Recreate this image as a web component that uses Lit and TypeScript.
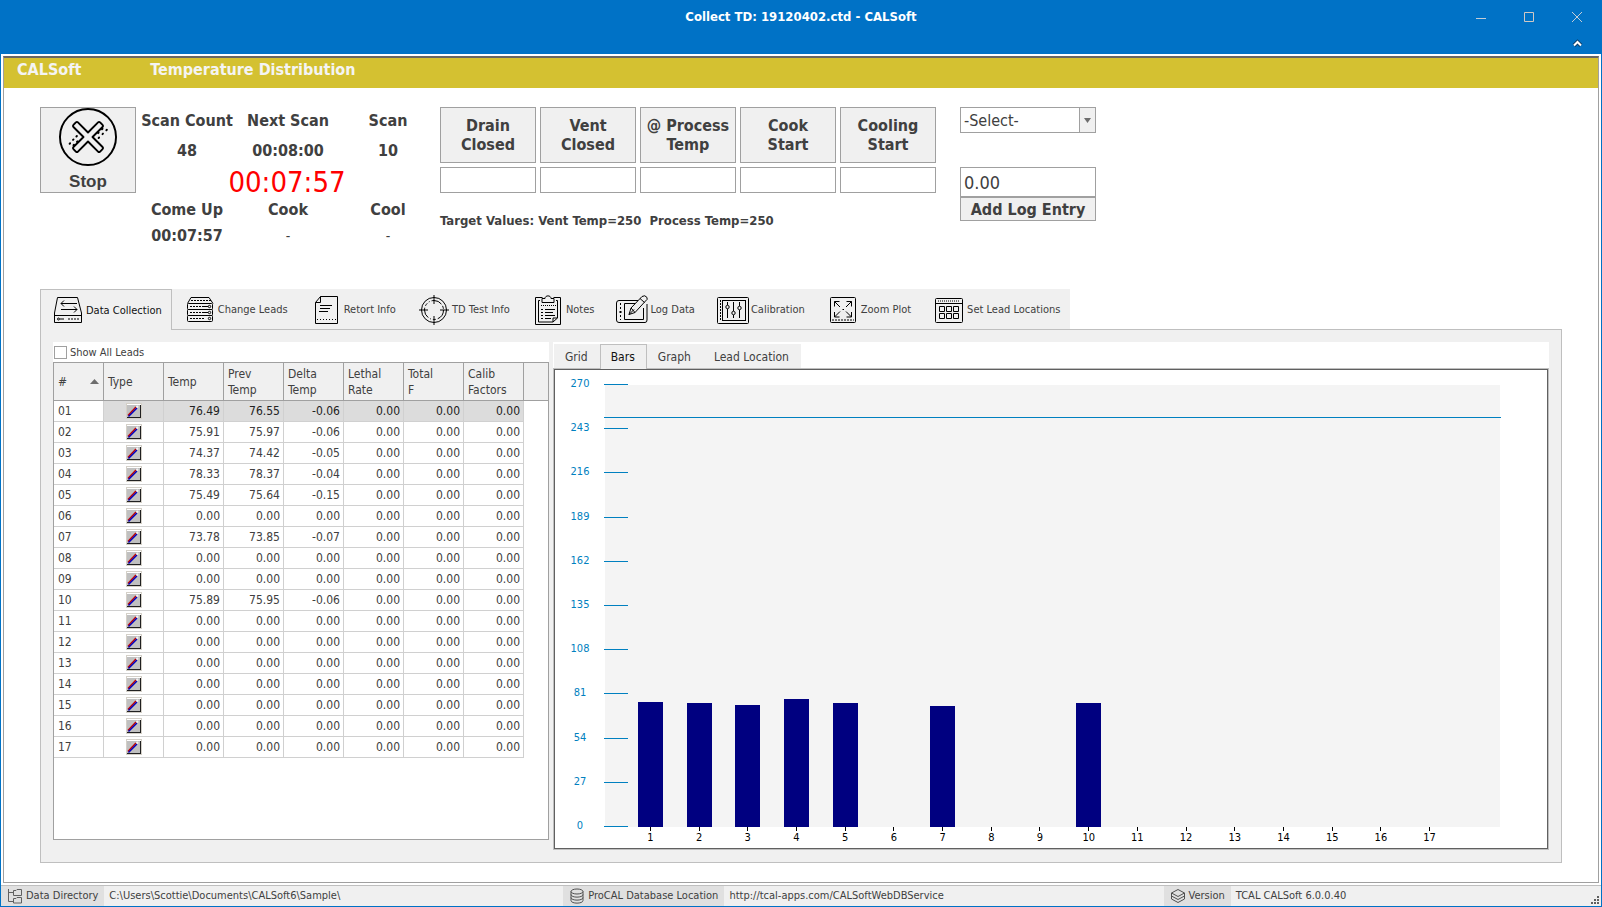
import { LitElement, html, css, svg } from "lit";
import { customElement, state } from "lit/decorators.js";
import { classMap } from "lit/directives/class-map.js";

interface Lead {
  id: string;
  temp: number;
  prev: number;
}

const TEMPS: [number, number][] = [
  [76.49, 76.55], [75.91, 75.97], [74.37, 74.42], [78.33, 78.37], [75.49, 75.64],
  [0, 0], [73.78, 73.85], [0, 0], [0, 0], [75.89, 75.95],
  [0, 0], [0, 0], [0, 0], [0, 0], [0, 0], [0, 0], [0, 0],
];

const LEADS: Lead[] = TEMPS.map(([temp, prev], i) => ({
  id: String(i + 1).padStart(2, "0"),
  temp,
  prev,
}));

const AXIS_MAX = 270;
const TICKS = [270, 243, 216, 189, 162, 135, 108, 81, 54, 27, 0];
const TARGET = 250;

const icons = {
  collect: svg`<path d="M5.500 3.500H25.500L29.500 19V28.500H2.500V19ZM2.500 21.500H29.500"/><path d="M9 9.500H25M12 6.500L9 9.500L12 12.500M9 15.500H25M22 12.500L25 15.500L22 18.500"/><circle cx="6.500" cy="25" r="1"/><path d="M8 25H12"/><path d="M16 25H27" stroke-dasharray="2 1"/>`,
  leads: svg`<path d="M7 3.500H25L29 9.500M7 3.500L3.500 9.500"/><path d="M7 6.500H27" stroke-dasharray="2 1"/><rect x="3.500" y="9.500" width="25" height="6" rx="1"/><rect x="3.500" y="15.500" width="25" height="6" rx="1"/><rect x="3.500" y="21.500" width="25" height="6" rx="1"/><path d="M6 12.500H20M6 18.500H20M6 24.500H20" stroke-dasharray="2 1"/><path d="M20 12.500H24M20 18.500H24"/><circle cx="25.500" cy="12.500" r="1.200"/><circle cx="25.500" cy="18.500" r="1.200"/><circle cx="25.500" cy="24.500" r="1.200"/>`,
  retort: svg`<path d="M10.500 2.500H27.500V29.500H5.500V8.500ZM10.500 2.500V8.500H5.500"/><path d="M10 11.500H22M10 14.500H20M9 17.500H18"/><path d="M7 25.500H26" stroke-dasharray="1 2"/>`,
  target: svg`<circle cx="16" cy="16" r="12.500"/><circle cx="16" cy="16" r="9.500" stroke-dasharray="11 2 3 2 1 2"/><path d="M16 1V10M16 22V31M1 16H10M22 16H31"/>`,
  notes: svg`<path d="M10.500 3.500H3.500V30.500H28.500V3.500H21.500"/><path d="M8 6.500H6.500V28H21L25.500 24V6.500H24M21 28V24H25.500"/><path d="M10 8.500V4.500H13C13 1 19 1 19 4.500H22V8.500Z"/><path d="M9 11.500H24" stroke-dasharray="1 1"/><path d="M13 15.500H23M13 18.500H21M13 21.500H23M13 24.500H19"/><path d="M9 15.500H11M9 18.500H11M9 21.500H11M9 24.500H11"/>`,
  log: svg`<path d="M22 6.500H3Q.500 6.500 .500 9V26Q.500 28.500 3 28.500H29Q31 28.500 31 26V10"/><path d="M19 9.500H8.500V25.500H27.500V14"/><path d="M4.500 9V26" stroke-dasharray="2 2"/><path d="M3 18H6"/><path d="M13 20.500L15 14L26 2.500Q29 .500 31 3.500Q32 5.500 29.500 7L19 18.500ZM15 14L19 18.500M13 20.500L18 15.500M24 4.500L28.500 8.500"/>`,
  calibration: svg`<rect x=".500" y="3.500" width="31" height="26" rx="1"/><rect x="5.500" y="6.500" width="23" height="20"/><path d="M3.500 6V27" stroke-dasharray="2 1"/><path d="M10.500 8V11M10.500 15V24M16.500 8V17M16.500 21V24M22.500 8V12M22.500 16V24"/><circle cx="10.500" cy="13" r="1.700"/><circle cx="16.500" cy="19" r="1.700"/><circle cx="22.500" cy="14" r="1.700"/>`,
  zoom: svg`<rect x="3.500" y="3.500" width="25" height="25" rx="1"/><path d="M5 26H27" stroke-dasharray="2 1"/><path d="M7.500 12.500V7.500H12.500M7.500 7.500L13 13M19.500 7.500H24.500V12.500M24.500 7.500L19 13M7.500 18V23H12.500M7.500 23L13 17.500M24.500 18V23H19.500M24.500 23L19 17.500M15.500 15.500H17"/>`,
  locations: svg`<rect x="2.500" y="4.500" width="27" height="24" rx="1"/><path d="M2.500 9.500H29.500"/><path d="M5 7H27" stroke-dasharray="1 1"/><path d="M6.500 12.500H11.500V17.500H6.500ZM13.500 12.500H18.500V17.500H13.500ZM20.500 12.500H25.500V17.500H20.500ZM6.500 19.500H11.500V24.500H6.500ZM13.500 19.500H18.500V24.500H13.500ZM20.500 19.500H25.500V24.500H20.500Z"/>`,
};

const TABS: { label: string; icon: keyof typeof icons }[] = [
  { label: "Data Collection", icon: "collect" },
  { label: "Change Leads", icon: "leads" },
  { label: "Retort Info", icon: "retort" },
  { label: "TD Test Info", icon: "target" },
  { label: "Notes", icon: "notes" },
  { label: "Log Data", icon: "log" },
  { label: "Calibration", icon: "calibration" },
  { label: "Zoom Plot", icon: "zoom" },
  { label: "Set Lead Locations", icon: "locations" },
];

const PHASES = [
  ["Drain", "Closed"],
  ["Vent", "Closed"],
  ["@ Process", "Temp"],
  ["Cook", "Start"],
  ["Cooling", "Start"],
];

const reset = css`
  * { box-sizing: border-box; }
  button, input, select { font: inherit; color: inherit; margin: 0; border-radius: 0; }
`;

@customElement("lead-table")
class LeadTable extends LitElement {
  static styles = [reset, css`
    :host { display: flex; flex-direction: column; background: #fff; }
    .all { display: flex; align-items: center; gap: 3px; height: 20px; padding-left: 1px; font-size: 11px; }
    .all input { appearance: none; width: 13px; height: 13px; border: 1px solid #a0a0a0; background: #fff; }
    .all input:checked { background: #0072c6; }
    .frame { flex: 1; border: 1px solid #a0a0a0; }
    table { width: 100%; border-collapse: separate; border-spacing: 0; table-layout: fixed; font-size: 12px; }
    th { height: 38px; padding: 0 4px; text-align: left; font-weight: normal; line-height: 16px; background: #f0f0f0;
      border-right: 1px solid #a0a0a0; border-bottom: 1px solid #a0a0a0; }
    th:last-child { border-right: 0; }
    td { height: 21px; padding: 0 3px; line-height: 16px; text-align: right; border-right: 1px solid #d0d0d0; border-bottom: 1px solid #d0d0d0; }
    td:first-child { text-align: left; padding-left: 4px; }
    td.type { text-align: center; }
    td:last-child { border: 0; background: #fff; }
    .selected td:not(:first-child):not(:last-child) { background: #dcdcdc; color: #222; }
    .sort { display: flex; justify-content: space-between; align-items: center; }
    .num { width: 50px; }
    .col { width: 60px; }
    svg { display: block; }
    .type svg { margin: 0 auto; }
  `];

  private pen() {
    return html`<svg width="16" height="16" viewBox="0 0 16 16" shape-rendering="crispEdges" aria-hidden="true">
      <rect width="16" height="16" fill="#d4d0c8"/><rect x="1" y="1" width="14" height="14" fill="#fff"/>
      <rect x="1" y="2" width="13" height="12" fill="#c0c0c0"/><path d="M14 2h1v13H1v-1h13z" fill="#202020"/>
      <g shape-rendering="auto" stroke-width="1.500"><path d="M2 12.500L10 4" stroke="#c00000"/><path d="M2.500 13.500L11 5" stroke="#0000c0"/><path d="M10.500 3L12 4.500" stroke="#f0f0f0" stroke-width="2"/></g>
    </svg>`;
  }

  render() {
    const heads = ["Temp", "Prev|Temp", "Delta|Temp", "Lethal|Rate", "Total|F", "Calib|Factors"];
    return html`
      <label class="all"><input type="checkbox" />Show All Leads</label>
      <div class="frame">
        <table>
          <thead><tr>
            <th class="num"><span class="sort">#<svg width="9" height="5" aria-hidden="true"><path d="M0 5L4.500 0L9 5Z" fill="#6d6d6d"/></svg></span></th>
            <th class="col">Type</th>
            ${heads.map((h) => html`<th class="col">${h.split("|").map((w, i) => (i ? html`<br />${w}` : w))}</th>`)}
            <th></th>
          </tr></thead>
          <tbody>
            ${LEADS.map((l, i) => html`<tr class=${classMap({ selected: i === 0 })}>
              <td>${l.id}</td><td class="type">${this.pen()}</td>
              <td>${l.temp.toFixed(2)}</td><td>${l.prev.toFixed(2)}</td>
              <td>${(l.temp - l.prev).toFixed(2)}</td>
              <td>0.00</td><td>0.00</td><td>0.00</td><td></td>
            </tr>`)}
          </tbody>
        </table>
      </div>`;
  }
}

@customElement("lead-bars")
class LeadBars extends LitElement {
  static styles = [reset, css`
    :host { display: flex; flex-direction: column; background: #fff; padding-top: 2px; }
    .tabs { display: flex; align-self: flex-start; margin-left: 1px; height: 24px; background: #f0f0f0; font-size: 12px; }
    .tabs button { border: 1px solid transparent; border-bottom: 0; background: none; padding: 0 11px 0 10px; }
    .tabs .on { border-color: #bfbfbf; color: #111; margin-bottom: -1px; background: #f0f0f0; z-index: 1; }
    .outer { flex: 1; display: flex; border: 1px solid #bfbfbf; }
    .inner { flex: 1; display: flex; border: 1px solid #606060; padding: 15px 47px 21px 50px; font-size: 11px; }
    .plot { flex: 1; position: relative; display: flex; padding: 0 46px 0 21px; background: #f4f4f4; }
    .cell { flex: 1; position: relative; display: flex; align-items: flex-end; justify-content: center; }
    .bar { width: 25px; background: #000080; }
    .cell span { position: absolute; top: 100%; left: 0; right: 0; text-align: center; color: #000; line-height: 13px; }
    .cell span::before { content: ""; display: block; width: 1px; height: 4px; margin: 0 auto; background: #000; }
    .tick { position: absolute; left: -1px; width: 24px; border-top: 1px solid #0080c0; }
    .tick b { position: absolute; right: 100%; top: -8px; width: 48px; text-align: center; font-weight: normal; line-height: 14px; color: #0080c0; }
    .target { position: absolute; left: -1px; right: -1px; border-top: 1px solid #0080c0; }
  `];

  @state() private tab = "Bars";

  render() {
    return html`
      <div class="tabs" role="tablist">
        ${["Grid", "Bars", "Graph", "Lead Location"].map((t) => html`<button role="tab" aria-selected=${t === this.tab}
          class=${classMap({ on: t === this.tab })} @click=${() => (this.tab = t)}>${t}</button>`)}
      </div>
      <div class="outer"><div class="inner"><div class="plot">
        ${LEADS.map((l, i) => html`<div class="cell"><div class="bar" style="height:${(l.temp / AXIS_MAX) * 100}%"></div><span>${i + 1}</span></div>`)}
        ${TICKS.map((t) => html`<div class="tick" style="bottom:${(t / AXIS_MAX) * 100}%"><b>${t}</b></div>`)}
        <div class="target" style="bottom:${(TARGET / AXIS_MAX) * 100}%"></div>
      </div></div></div>`;
  }
}

@customElement("app-root")
class AppRoot extends LitElement {
  static styles = [reset, css`
    :host { display: flex; flex-direction: column; min-height: 100vh; box-sizing: border-box; border: 1px solid #0072c6; border-top: 0;
      background: #fff; color: #404040; font-family: "DejaVu Sans Condensed", "DejaVu Sans", sans-serif; font-size: 11px; }
    .title { display: grid; grid-template-columns: 1fr auto 1fr; grid-template-rows: 33px 21px; align-items: center; background: #0072c6; color: #fff; }
    .title h1 { grid-column: 2; margin: 0; font-size: 13px; font-weight: bold; }
    .win { display: flex; justify-content: flex-end; }
    .win button, .fold { width: 48px; height: 21px; display: grid; place-items: center; padding: 0; border: 0; background: none; }
    .fold { grid-column: 3; justify-self: end; }
    .page { flex: 1; display: flex; flex-direction: column; margin: 2px; border: 1px solid #a0a0a0; border-top: 2px solid #666; }
    .banner { display: flex; gap: 69px; height: 30px; padding: 2px 13px; background: #d4c131; color: #f4f4f4; font-size: 16px; font-weight: bold; line-height: 20px; }
    .controls { display: flex; align-items: flex-start; padding: 19px 36px 0; height: 201px; }
    .stop { width: 96px; height: 86px; border: 1px solid #a0a0a0; background: #f0f0f0; padding: 0; display: flex; flex-direction: column; align-items: center; justify-content: flex-start; gap: 6px;
      font: bold 17px/20px "Liberation Sans", Arial, sans-serif; }
    .stats { display: grid; grid-template-columns: 102px 100px 100px; grid-template-rows: 26px 34px 30px 25px 27px; margin-right: 2px; font-size: 16px; font-weight: bold; text-align: center; align-items: center; }
    .stats .clock { grid-column: 1 / 4; color: #f00; font-size: 29px; line-height: 30px; font-weight: normal; }
    .stats .idle { font-weight: normal; font-size: 14px; }
    .phases { display: grid; grid-template-columns: repeat(5, 96px); gap: 4px; }
    .phases button { height: 56px; padding: 0; border: 1px solid #a0a0a0; background: #f0f0f0; font-size: 16px; line-height: 19px; font-weight: bold; }
    .phases input { width: 96px; height: 26px; border: 1px solid #a0a0a0; background: #fff; padding: 0 3px; font-size: 16px; }
    .phases p { grid-column: 1 / 6; margin: 16px 0 0; font-size: 13px; line-height: 16px; font-weight: bold; white-space: pre; }
    .log { display: flex; flex-direction: column; width: 136px; margin-left: 24px; }
    .pick { display: grid; height: 26px; margin-bottom: 34px; border: 1px solid #a0a0a0; font-size: 16px; }
    .pick select { grid-area: 1 / 1; appearance: none; border: 0; background: #fff; padding: 0 20px 0 3px; }
    .pick i { grid-area: 1 / 1; justify-self: end; width: 16px; display: grid; place-items: center; border-left: 1px solid #a0a0a0; background: #f0f0f0; pointer-events: none; z-index: 1; }
    .log > input { height: 30px; border: 1px solid #a0a0a0; padding: 0 3px; font-size: 18px; width: 100%; }
    .log > button { height: 24px; padding: 0; border: 1px solid #a0a0a0; background: #f0f0f0; font-size: 16px; font-weight: bold; }
    .tabs { display: flex; align-self: flex-start; height: 40px; margin-left: 36px; background: #f0f0f0; }
    .tabs button { display: flex; align-items: center; gap: 2px; border: 1px solid transparent; border-bottom: 0; background: none; padding: 0 9px 0 11px; white-space: nowrap; }
    .tabs .on { border-color: #bfbfbf; background: #f0f0f0; color: #111; margin-bottom: -1px; z-index: 1; }
    .tabs svg { fill: none; stroke: #000; stroke-width: 1; }
    .panel { flex: 1; display: grid; grid-template-columns: 496px 1fr; gap: 4px; margin: 0 36px 19px; padding: 12px; border: 1px solid #bfbfbf; background: #f0f0f0; }
    lead-table { margin-bottom: 10px; }
    .panel p { margin: 0; background: #fff; grid-column: 1 / 3; padding: 12px; }
    footer { display: flex; height: 21px; border-top: 1px solid #bfbfbf; background: #f0f0f0; line-height: 20px; white-space: nowrap; }
    .key { display: flex; align-items: center; gap: 3px; padding: 0 6px; background: #e0e0e0; }
    .value { flex: 46 1 0; padding-left: 5px; }
    .value.service { flex-grow: 44; }
    .value.version { flex-grow: 36; }
    .grip { align-self: flex-end; }
  `];

  @state() private tab = 0;

  render() {
    return html`
      <header class="title">
        <h1>Collect TD: 19120402.ctd - CALSoft</h1>
        <div class="win">
          <button aria-label="Minimize"><svg width="10" height="10"><path d="M0 6.500H10" stroke="#c5cdd6"/></svg></button>
          <button aria-label="Maximize"><svg width="10" height="10"><path d="M.500 .500H9.500V9.500H.500Z" fill="none" stroke="#d0c8c4"/></svg></button>
          <button aria-label="Close"><svg width="10" height="10"><path d="M0 0L10 10M10 0L0 10" stroke="#c5cdd6"/></svg></button>
        </div>
        <button class="fold" aria-label="Collapse ribbon"><svg width="11" height="9"><path d="M2 6.500L5.500 3L9 6.500" fill="none" stroke="#0b3f6b" stroke-width="4"/><path d="M2 6.500L5.500 3L9 6.500" fill="none" stroke="#fff" stroke-width="2"/></svg></button>
      </header>
      <main class="page">
        <div class="banner"><span>CALSoft</span><span>Temperature Distribution</span></div>
        <section class="controls">
          <button class="stop">
            <svg width="60" height="60" viewBox="-30 -30 60 60" fill="none" stroke="#000" stroke-width="2" aria-hidden="true">
              <circle r="29"/>
              <path transform="rotate(45)" stroke-linejoin="round" d="M-3.300-3.300V-18Q-3.300-19.500-1.800-19.500H1.800Q3.300-19.500 3.300-18V-3.300H18Q19.500-3.300 19.500-1.800V1.800Q19.500 3.300 18 3.300H3.300V18Q3.300 19.500 1.800 19.500H-1.800Q-3.300 19.500-3.300 18V3.300H-18Q-19.500 3.300-19.500 1.800V-1.800Q-19.500-3.300-18-3.300Z"/>
              <path stroke-linecap="round" d="M-12-.500l.5-.5M-15.500 3l.5-.5M-19 7l.5-.5M-11.500 5l.5-.5M-15 8.500l.5-.5M10.500-4l.5-.5M14.500-8l.5-.5M11 1l.5-.5M15-3l.5-.5M19-7l.5-.5"/>
            </svg>Stop
          </button>
          <div class="stats">
            <span>Scan Count</span><span>Next Scan</span><span>Scan</span>
            <span>48</span><span>00:08:00</span><span>10</span>
            <span class="clock">00:07:57</span>
            <span>Come Up</span><span>Cook</span><span>Cool</span>
            <span>00:07:57</span><span class="idle">-</span><span class="idle">-</span>
          </div>
          <div class="phases">
            ${PHASES.map(([a, b]) => html`<button>${a}<br />${b}</button>`)}
            ${PHASES.map(([a, b]) => html`<input type="text" aria-label="${a} ${b} time" />`)}
            <p>Target Values: Vent Temp=250  Process Temp=250</p>
          </div>
          <div class="log">
            <label class="pick"><select aria-label="Log entry type"><option>-Select-</option></select><i><svg width="7" height="5"><path d="M0 0H7L3.500 5Z" fill="#6d6d6d"/></svg></i></label>
            <input type="text" aria-label="Log entry value" value="0.00" />
            <button>Add Log Entry</button>
          </div>
        </section>
        <nav class="tabs" role="tablist">
          ${TABS.map((t, i) => html`<button role="tab" aria-selected=${i === this.tab} class=${classMap({ on: i === this.tab })} @click=${() => (this.tab = i)}>
            <svg width="32" height="32" viewBox="0 0 32 32" aria-hidden="true">${icons[t.icon]}</svg>${t.label}</button>`)}
        </nav>
        <section class="panel">
          ${this.tab === 0 ? html`<lead-table></lead-table><lead-bars></lead-bars>` : html`<p>${TABS[this.tab].label}</p>`}
        </section>
      </main>
      <footer>
        <span class="key"><svg width="16" height="16" fill="none" stroke="#606060" aria-hidden="true"><path d="M1.500 1V13.500H6M1.500 4.500H6M6.500 2.500H9L10 1.500H14.500V7.500H6.500ZM6.500 10.500H9L10 9.500H14.500V15H6.500Z"/></svg>Data Directory</span>
        <span class="value">C:\\Users\\Scottie\\Documents\\CALSoft6\\Sample\\</span>
        <span class="key"><svg width="16" height="16" fill="none" stroke="#505050" aria-hidden="true"><ellipse cx="8" cy="3.500" rx="6" ry="2.500"/><path d="M2 3.500V12.500C2 16 14 16 14 12.500V3.500M2 6.500C2 10 14 10 14 6.500M2 9.500C2 13 14 13 14 9.500"/></svg>ProCAL Database Location</span>
        <span class="value service">http://tcal-apps.com/CALSoftWebDBService</span>
        <span class="key"><svg width="16" height="16" fill="none" stroke="#505050" aria-hidden="true"><path d="M8 1.500L14.500 5L8 8.500L1.500 5ZM1.500 5V11L8 14.500L14.500 11V5M1.500 8L8 11.500L14.500 8"/></svg>Version</span>
        <span class="value version">TCAL CALSoft 6.0.0.40</span>
        <svg class="grip" width="10" height="10" aria-hidden="true" fill="#606060"><path d="M6 0h2v2H6zM3 3h2v2H3zM6 3h2v2H6zM0 6h2v2H0zM3 6h2v2H3zM6 6h2v2H6z"/></svg>
      </footer>`;
  }
}
